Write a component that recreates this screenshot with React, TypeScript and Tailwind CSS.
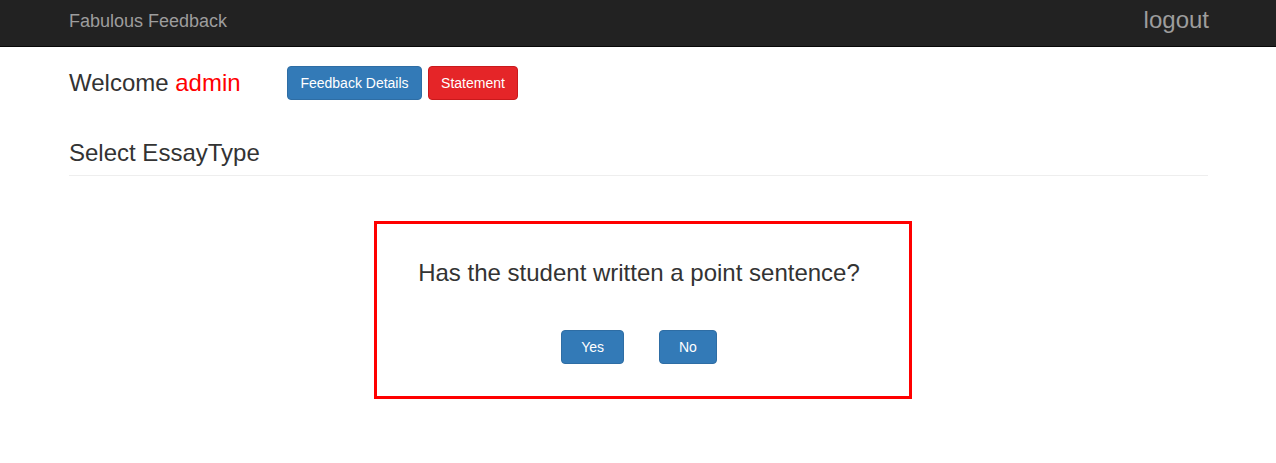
export default function App() {
  return (
    <div className="min-h-screen bg-white text-[#333] font-['Liberation_Sans',Arial,sans-serif]">
      <header className="h-[47px] bg-[#222] border-b border-[#080808]">
        <div className="w-[1170px] mx-auto pl-[16px] pr-[15px] h-[46px] flex items-center justify-between">
          <a href="#" className="text-[18px] leading-5 text-[#9d9d9d] -mt-[5px]">
            Fabulous Feedback
          </a>
          <a href="#" className="text-[24px] leading-6 text-[#9d9d9d] -mt-[6px] mr-[-1px]">
            logout
          </a>
        </div>
      </header>

      <main className="w-[1170px] mx-auto pl-[16px] pr-[15px]">
        <div className="mt-[19px] flex items-center">
          <h2 className="text-[24px] leading-[26px] w-[218px]">
            Welcome <span className="text-[#ff0000]">admin</span>
          </h2>
          <div className="flex gap-[6px]">
            <button
              type="button"
              className="h-[34px] w-[135px] text-[14px] text-white bg-[#337ab7] border border-[#2e6da4] rounded"
            >
              Feedback Details
            </button>
            <button
              type="button"
              className="h-[34px] w-[90px] text-[14px] text-white bg-[#e52528] border border-[#c9191c] rounded"
            >
              Statement
            </button>
          </div>
        </div>

        <div className="mt-[40px] pb-[9px] border-b border-[#eee]">
          <h3 className="text-[24px] leading-[26px]">Select EssayType</h3>
        </div>

        <div className="mt-[45px] flex justify-center pl-[9px]">
          <div className="w-[538px] border-[3px] border-[#ff0000] pt-[36px] pb-[32px] pr-[8px] flex flex-col items-center">
            <p className="text-[24px] leading-[26px]">Has the student written a point sentence?</p>
            <div className="mt-[44px] flex gap-[35px]">
              <button
                type="button"
                className="h-[34px] px-[19px] text-[14px] text-white bg-[#337ab7] border border-[#2e6da4] rounded"
              >
                Yes
              </button>
              <button
                type="button"
                className="h-[34px] px-[19px] text-[14px] text-white bg-[#337ab7] border border-[#2e6da4] rounded"
              >
                No
              </button>
            </div>
          </div>
        </div>
      </main>
    </div>
  );
}
